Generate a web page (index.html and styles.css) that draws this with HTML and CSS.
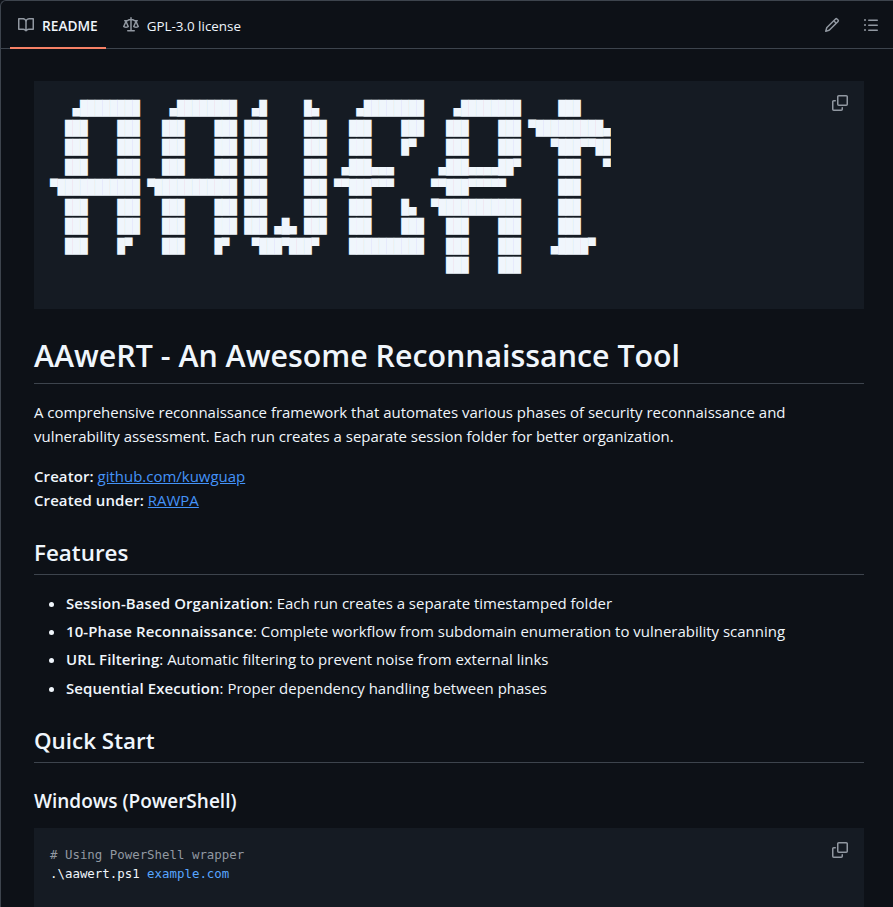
FILE: index.html
```html
<!DOCTYPE html>
<html lang="en">
<head>
<meta charset="utf-8">
<title>AAweRT</title>
<link rel="stylesheet" href="styles.css">
</head>
<body>
<div class="box">
  <nav class="tabs">
    <a class="tab active">
      <svg class="icon" viewBox="0 0 16 16"><path d="M0 1.75A.75.75 0 0 1 .75 1h4.253c1.227 0 2.317.59 3 1.501A3.743 3.743 0 0 1 11.006 1h4.245a.75.75 0 0 1 .75.75v10.5a.75.75 0 0 1-.75.75h-4.507a2.25 2.25 0 0 0-1.591.659l-.622.621a.75.75 0 0 1-1.06 0l-.622-.621A2.25 2.25 0 0 0 5.258 13H.75a.75.75 0 0 1-.75-.75Zm7.251 10.324.004-5.073-.002-2.253A2.25 2.25 0 0 0 5.003 2.5H1.5v9h3.757a3.75 3.75 0 0 1 1.994.574ZM8.755 4.75l-.004 7.322a3.752 3.752 0 0 1 1.992-.572H14.5v-9h-3.495a2.25 2.25 0 0 0-2.25 2.25Z"/></svg>
      <span>README</span>
    </a>
    <a class="tab">
      <svg class="icon" viewBox="0 0 16 16"><path d="M8.75.75V2h.985c.304 0 .603.08.867.231l1.29.736c.038.022.08.033.124.033h2.234a.75.75 0 0 1 0 1.5h-.427l2.111 4.692a.75.75 0 0 1-.154.838l-.53-.53.529.531-.001.002-.002.002-.006.006-.006.005-.01.01-.045.04c-.21.176-.441.327-.686.45C14.556 10.78 13.88 11 13 11a4.498 4.498 0 0 1-2.023-.454 3.544 3.544 0 0 1-.686-.45l-.045-.04-.016-.015-.006-.006-.004-.004v-.001a.75.75 0 0 1-.154-.838L12.178 4.5h-.162c-.305 0-.604-.079-.868-.231l-1.29-.736a.245.245 0 0 0-.124-.033H8.75V13h2.5a.75.75 0 0 1 0 1.5h-6.5a.75.75 0 0 1 0-1.5h2.5V3.5h-.984a.245.245 0 0 0-.124.033l-1.289.737c-.265.15-.564.23-.869.23h-.162l2.112 4.692a.75.75 0 0 1-.154.838l-.53-.53.529.531-.001.002-.002.002-.006.006-.016.015-.045.04c-.21.176-.441.327-.686.45C4.556 10.78 3.88 11 3 11a4.498 4.498 0 0 1-2.023-.454 3.544 3.544 0 0 1-.686-.45l-.045-.04-.016-.015-.006-.006-.004-.004v-.001a.75.75 0 0 1-.154-.838L2.178 4.5H1.75a.75.75 0 0 1 0-1.5h2.234a.249.249 0 0 0 .125-.033l1.288-.737c.265-.15.564-.23.869-.23h.984V.75a.75.75 0 0 1 1.5 0Zm2.945 8.477c.285.135.718.273 1.305.273s1.02-.138 1.305-.273L13 6.327Zm-10 0c.285.135.718.273 1.305.273s1.02-.138 1.305-.273L3 6.327Z"/></svg>
      <span>GPL-3.0 license</span>
    </a>
    <div class="tools">
      <svg class="icon" viewBox="0 0 16 16"><path d="M11.013 1.427a1.75 1.75 0 0 1 2.474 0l1.086 1.086a1.75 1.75 0 0 1 0 2.474l-8.61 8.61c-.21.21-.47.364-.756.445l-3.251.93a.75.75 0 0 1-.927-.928l.929-3.25c.081-.286.235-.547.445-.758l8.61-8.61Zm.176 4.823L9.75 4.81l-6.286 6.287a.253.253 0 0 0-.064.108l-.558 1.953 1.953-.558a.253.253 0 0 0 .108-.064Zm1.238-3.763a.25.25 0 0 0-.354 0L10.811 3.75l1.439 1.44 1.263-1.263a.25.25 0 0 0 0-.354Z"/></svg>
      <svg class="icon" viewBox="0 0 16 16"><path d="M5.75 2.5h8.5a.75.75 0 0 1 0 1.5h-8.5a.75.75 0 0 1 0-1.5Zm0 5h8.5a.75.75 0 0 1 0 1.5h-8.5a.75.75 0 0 1 0-1.5Zm0 5h8.5a.75.75 0 0 1 0 1.5h-8.5a.75.75 0 0 1 0-1.5ZM2 14a1 1 0 1 1 0-2 1 1 0 0 1 0 2Zm1-6a1 1 0 1 1-2 0 1 1 0 0 1 2 0ZM2 4a1 1 0 1 1 0-2 1 1 0 0 1 0 2Z"/></svg>
    </div>
  </nav>
  <article class="markdown">
    <div class="snippet">
<pre class="code art"><code class="art-text">   ▄████████    ▄████████  ▄█     █▄     ▄████████    ▄████████     ███
  ███    ███   ███    ███ ███     ███   ███    ███   ███    ███ ▀█████████▄
  ███    ███   ███    ███ ███     ███   ███    █▀    ███    ███    ▀███▀▀██
  ███    ███   ███    ███ ███     ███  ▄███▄▄▄      ▄███▄▄▄▄██▀     ███   ▀
▀███████████ ▀███████████ ███     ███ ▀▀███▀▀▀     ▀▀███▀▀▀▀▀       ███
  ███    ███   ███    ███ ███     ███   ███    █▄  ▀███████████     ███
  ███    ███   ███    ███ ███ ▄█▄ ███   ███    ███   ███    ███     ███
  ███    █▀    ███    █▀   ▀███▀███▀    ██████████   ███    ███    ▄████▀
                                                     ███    ███
</code></pre>
      <svg class="icon copy" viewBox="0 0 16 16"><path d="M0 6.75C0 5.784.784 5 1.75 5h1.5a.75.75 0 0 1 0 1.5h-1.5a.25.25 0 0 0-.25.25v7.5c0 .138.112.25.25.25h7.5a.25.25 0 0 0 .25-.25v-1.5a.75.75 0 0 1 1.5 0v1.5A1.75 1.75 0 0 1 9.25 16h-7.5A1.75 1.75 0 0 1 0 14.25Z"/><path d="M5 1.75C5 .784 5.784 0 6.75 0h7.5C15.216 0 16 .784 16 1.75v7.5A1.75 1.75 0 0 1 14.25 11h-7.5A1.75 1.75 0 0 1 5 9.25Zm1.75-.25a.25.25 0 0 0-.25.25v7.5c0 .138.112.25.25.25h7.5a.25.25 0 0 0 .25-.25v-7.5a.25.25 0 0 0-.25-.25Z"/></svg>
    </div>
    <h1>AAweRT - An Awesome Reconnaissance Tool</h1>
    <p>A comprehensive reconnaissance framework that automates various phases of security reconnaissance and vulnerability assessment. Each run creates a separate session folder for better organization.</p>
    <p><strong>Creator:</strong> <a href="#">github.com/kuwguap</a><br><strong>Created under:</strong> <a href="#">RAWPA</a></p>
    <h2>Features</h2>
    <ul>
      <li><strong>Session-Based Organization</strong>: Each run creates a separate timestamped folder</li>
      <li><strong>10-Phase Reconnaissance</strong>: Complete workflow from subdomain enumeration to vulnerability scanning</li>
      <li><strong>URL Filtering</strong>: Automatic filtering to prevent noise from external links</li>
      <li><strong>Sequential Execution</strong>: Proper dependency handling between phases</li>
    </ul>
    <h2>Quick Start</h2>
    <h3>Windows (PowerShell)</h3>
    <div class="snippet">
<pre class="code"><span class="comment"># Using PowerShell wrapper</span>
.\aawert.ps1 <span class="arg">example.com</span>

</pre>
      <svg class="icon copy" viewBox="0 0 16 16"><path d="M0 6.75C0 5.784.784 5 1.75 5h1.5a.75.75 0 0 1 0 1.5h-1.5a.25.25 0 0 0-.25.25v7.5c0 .138.112.25.25.25h7.5a.25.25 0 0 0 .25-.25v-1.5a.75.75 0 0 1 1.5 0v1.5A1.75 1.75 0 0 1 9.25 16h-7.5A1.75 1.75 0 0 1 0 14.25Z"/><path d="M5 1.75C5 .784 5.784 0 6.75 0h7.5C15.216 0 16 .784 16 1.75v7.5A1.75 1.75 0 0 1 14.25 11h-7.5A1.75 1.75 0 0 1 5 9.25Zm1.75-.25a.25.25 0 0 0-.25.25v7.5c0 .138.112.25.25.25h7.5a.25.25 0 0 0 .25-.25v-7.5a.25.25 0 0 0-.25-.25Z"/></svg>
    </div>
  </article>
</div>
</body>
</html>
```
FILE: styles.css
```css
* { box-sizing: border-box; }
html, body { margin: 0; height: 100%; overflow: hidden; background: #0d1117; }
body {
  color: #f0f6fc;
  font-family: "Open Sans", "Noto Sans", sans-serif;
  font-size: 14.97px;
  line-height: 24px;
}
.box {
  border-top: 1px solid #3d444d;
  border-left: 1px solid #3d444d;
  border-top-left-radius: 6px;
  width: 893px;
}
.tabs {
  display: flex;
  align-items: stretch;
  height: 48px;
  padding-left: 9px;
  border-bottom: 1px solid #3d444d;
}
.tab {
  display: flex;
  align-items: center;
  gap: 8px;
  padding: 2px 8px 0;
  margin-right: 9px;
  font-size: 13.4px;
  margin-bottom: -1px;
  border-bottom: 2px solid transparent;
}
.tab span { padding-top: 2px; }
.tab.active { font-weight: 600; font-size: 13.7px; border-bottom-color: #f78166; }
.icon { width: 16px; height: 16px; fill: #9198a1; flex: none; display: block; }
.tools {
  margin-left: auto;
  display: flex;
  align-items: center;
  gap: 23px;
  padding-right: 14px;
}
.markdown { padding: 32px 29px 0 33px; }
.snippet { position: relative; margin-bottom: 16px; background: #151b23; }
.copy { position: absolute; top: 14px; right: 16px; }
.code {
  margin: 0;
  padding: 17px 16px 15px;
  font-family: "DejaVu Sans Mono", monospace;
  font-size: 12.42px;
  line-height: 19.3px;
  color: #f0f6fc;
  overflow: hidden;
}
.art { height: 228px; padding-top: 17px; }
.art-text {
  display: block;
  font: inherit;
  font-size: 12.7px;
  letter-spacing: -0.166px;
  line-height: 17.5px;
  transform: scaleY(1.127);
  transform-origin: top;
}
.comment { color: #9198a1; }
.arg { color: #58a6ff; }
h1, h2, h3 { font-weight: 600; margin: 24px 0 16px; }
h1, h2 { border-bottom: 1px solid #3d444d; }
h1 { font-size: 30.35px; line-height: 40px; padding: 3px 0 6.6px; }
h2 { font-size: 22.4px; line-height: 30px; padding: 2px 0 6.2px; }
h3 { font-size: 19px; line-height: 25px; padding-top: 2px; margin-bottom: 14px; }
p { margin: 0 0 16px; }
a[href] { color: #4493f8; }
strong { font-weight: 600; letter-spacing: 0.1px; }
ul { margin: 1px 0 16px; padding-left: 32px; }
li + li { margin-top: 4.33px; }
```
